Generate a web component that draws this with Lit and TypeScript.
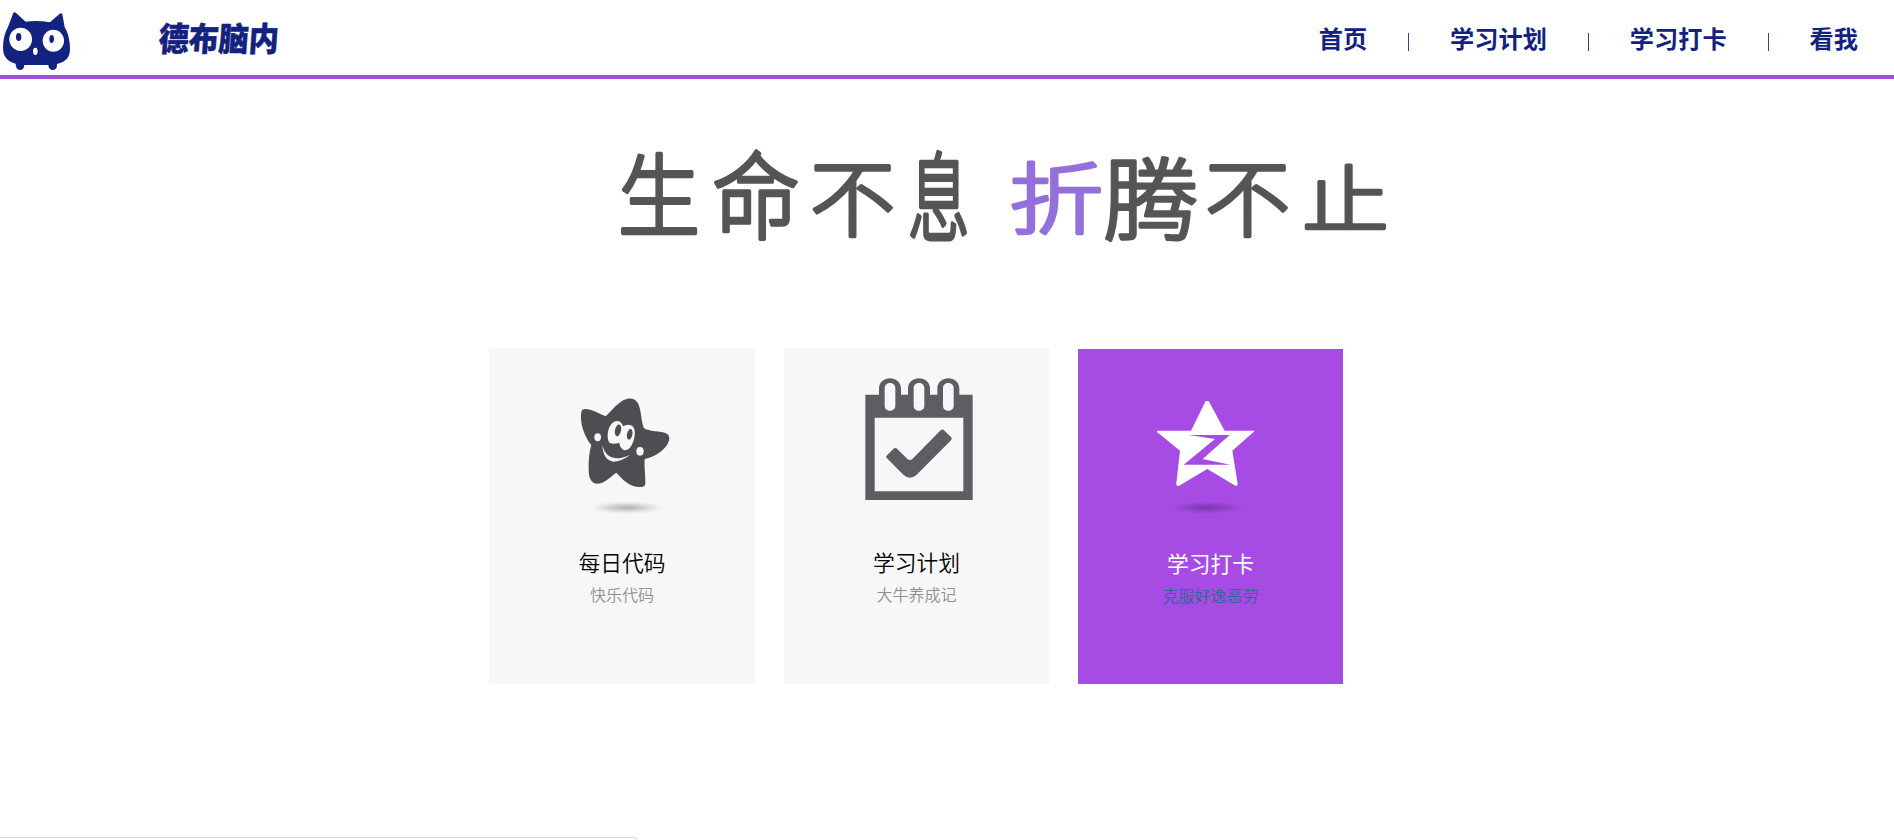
import { LitElement, html, css, svg } from "lit";
import { customElement } from "lit/decorators.js";

const cat = svg`
  <path fill="#14227f" d="M40 38Q44 34 49 40L77 65Q112 60 150 67L179 41Q185 37 187 43L194 81Q210 108 210 148Q210 184 171 192Q172 210 157 210Q146 209 145 195H73Q72 210 60 210Q47 209 47 191Q9 181 9 144Q9 106 24 81Z"/>
  <ellipse cx="62" cy="118" rx="34" ry="35" fill="#fff"/>
  <ellipse cx="160" cy="122" rx="32" ry="33" fill="#fff"/>
  <ellipse cx="56" cy="111" rx="8" ry="12" fill="#14227f"/>
  <ellipse cx="155" cy="117" rx="7" ry="12" fill="#14227f"/>
  <ellipse cx="106" cy="154" rx="7" ry="11" fill="#fff"/>`;

const shadow = svg`<defs><radialGradient id="g"><stop offset="0" stop-color="#000" stop-opacity=".27"/><stop offset=".45" stop-color="#000" stop-opacity=".14"/><stop offset=".8" stop-color="#000" stop-opacity=".03"/><stop offset="1" stop-color="#000" stop-opacity="0"/></radialGradient></defs>
  <ellipse cx="441" cy="503" rx="120" ry="20" fill="url(#g)"/>`;

const smileStar = svg`
  <path fill="#4d4e52" d="M304 216Q305 207 316 207C336 207 359 222 377 229C392 216 409 192 431 180C447 172 466 173 474 190C485 213 482 239 491 263C506 276 543 272 558 280Q571 287 567 302C557 331 526 349 494 357C492 382 497 408 496 431Q495 441 480 441C447 440 428 418 409 398C389 412 374 431 349 431Q331 428 327 405C325 375 326 341 334 316C313 289 298 247 304 216Z"/>
  <g fill="#f7f7f7">
    <path d="M383 290C382 262 397 242 412 243Q426 245 429 259Q443 251 456 257C468 264 466 291 458 309C450 328 438 334 430 329Q419 323 418 308Q400 314 390 309Q384 305 383 290Z"/>
    <ellipse cx="353" cy="292" rx="10" ry="12"/><ellipse cx="480" cy="334" rx="11" ry="13"/>
    <path d="M367 316Q376 352 407 355Q426 356 451 344Q423 365 400 365Q370 361 367 316Z"/>
  </g>
  <g fill="#4d4e52"><ellipse cx="414" cy="271" rx="9" ry="18" transform="rotate(12 414 271)"/><ellipse cx="449" cy="283" rx="8" ry="16" transform="rotate(12 449 283)"/></g>
  ${shadow}`;

const calendar = svg`
  <path fill="#5d5e64" fill-rule="evenodd" d="M286 164H327V146C327 104 393 104 393 146V164H414V146C414 104 480 104 480 146V164H502V146C502 104 568 104 568 146V164H608V480H286ZM314 233V454H580V233ZM344 144V198C344 217 376 217 376 198V144C376 124 344 124 344 144ZM431 144V198C431 217 463 217 463 198V144C463 124 431 124 431 144ZM519 144V198C519 217 551 217 551 198V144C551 124 519 124 519 144Z"/>
  <path fill="#5d5e64" d="M349 348L372 325Q376 322 381 326L413 358Q420 363 427 357L512 271Q517 266 522 271L543 291Q548 296 543 301L440 404Q420 422 400 404L350 354Q347 351 349 348Z"/>`;

const zStar = svg`
  <path fill="#fff" d="M437 183H446L494 272H585L517 332L533 431Q533 439 526 437L442 387L356 438Q348 439 349 430L360 332L291 276V272H393Z"/>
  <path fill="#a74be5" d="M386 285H509L428 357L511 374H371L465 297Z"/>
  ${shadow}`;

const cards = [
  { title: "每日代码", sub: "快乐代码", box: "27 24 798 546", art: smileStar, cls: "first" },
  { title: "学习计划", sub: "大牛养成记", box: "42 24 795 546", art: calendar, cls: "" },
  { title: "学习打卡", sub: "克服好逸恶劳", box: "54 27 795 546", art: zStar, cls: "active" },
];

// Each character of the slogan has its own proportions: x, baseline, width scale, height scale.
const slogan: [string, number, number, number, number][] = [
  ["生", 18, 99, 1, 1.1],
  ["命", 112, 102, 1.07, 1.16],
  ["不", 210, 100, 1.04, 1.03],
  ["息", 308, 103, 0.75, 1.17],
  ["折", 409, 98, 1.15, 0.95],
  ["腾", 504, 103, 1.15, 1.1],
  ["不", 605, 100, 1.04, 1.03],
  ["止", 702, 96, 1.06, 0.89],
];

@customElement("app-root")
export class AppRoot extends LitElement {
  static styles = css`
    :host { display: flex; flex-direction: column; height: 840px; overflow: hidden; background: #fff;
      font-family: "Noto Sans CJK SC", sans-serif; color: #000; }
    header { box-sizing: border-box; height: 79px; flex: none; display: flex; align-items: flex-start;
      border-bottom: 4px solid #a74be5; }
    .cat { width: 75px; height: 75px; display: block; }
    .brand { margin: 0 0 0 84px; font-size: 30px; line-height: 75px; font-weight: 900; color: #14227f;
      -webkit-text-stroke: .5px #14227f; transform: skewX(-4deg) scaleY(1.1); }
    nav { margin-left: auto; margin-right: 36px; display: flex; line-height: 76px; color: #14227f; }
    .link { font-size: 24.2px; font-weight: 700; }
    .bar { width: 83px; display: flex; justify-content: center; align-items: center; height: 84px; }
    .bar::before { content: ""; width: 1px; height: 18px; background: #2d4a75; }
    .slogan { display: block; width: 800px; height: 170px; margin: 31px 0 0 600px; flex: none; }
    .slogan text { font-size: 82px; font-weight: 300; fill: #555; stroke: #555; stroke-width: 3.6px;
      stroke-linejoin: round; stroke-linecap: round; vector-effect: non-scaling-stroke; }
    .slogan .accent { fill: #9370db; stroke: #9370db; }
    main { display: flex; gap: 29px; margin: 68px 0 0 489px; align-items: flex-end; }
    .card { width: 265px; height: 336px; background: #f7f7f7; text-align: center; overflow: hidden;
      display: flex; flex-direction: column; justify-content: flex-end; }
    .first { width: 266px; }
    .active { background: #a74be5; height: 335px; color: #fff; }
    .art { display: block; width: 100%; height: 182px; flex: none; }
    .title { margin: 0; padding-top: 16px; font-size: 21.8px; line-height: 32px; font-weight: 350; }
    .active .title { font-weight: 400; }
    .sub { margin: 0; height: 106px; font-size: 16px; line-height: 33px; font-weight: 350; color: #8f8f8f; }
    .active .sub { color: #336699; font-weight: 400; }
    .status { margin-top: auto; width: 637px; height: 3px; box-sizing: border-box; border-top: 1px solid #dedede;
      border-right: 1px solid #dedede; border-top-right-radius: 5px; }
  `;

  render() {
    return html`
      <header>
        <svg class="cat" viewBox="0 0 225 225">${cat}</svg>
        <h1 class="brand">德布脑内</h1>
        <nav>
          <span class="link">首页</span><span class="bar"></span>
          <span class="link">学习计划</span><span class="bar"></span>
          <span class="link">学习打卡</span><span class="bar"></span>
          <span class="link">看我</span>
        </nav>
      </header>
      <svg class="slogan" viewBox="0 -20 800 170">
        ${slogan.map(([ch, x, y, sx, sy]) => svg`<text class=${ch === "折" ? "accent" : ""}
          transform="translate(${x} ${y}) scale(${sx} ${sy})">${ch}</text>`)}
      </svg>
      <main>
        ${cards.map((c) => html`
          <section class="card ${c.cls}">
            <svg class="art" viewBox=${c.box}>${c.art}</svg>
            <h2 class="title">${c.title}</h2>
            <p class="sub">${c.sub}</p>
          </section>`)}
      </main>
      <div class="status"></div>
    `;
  }
}
